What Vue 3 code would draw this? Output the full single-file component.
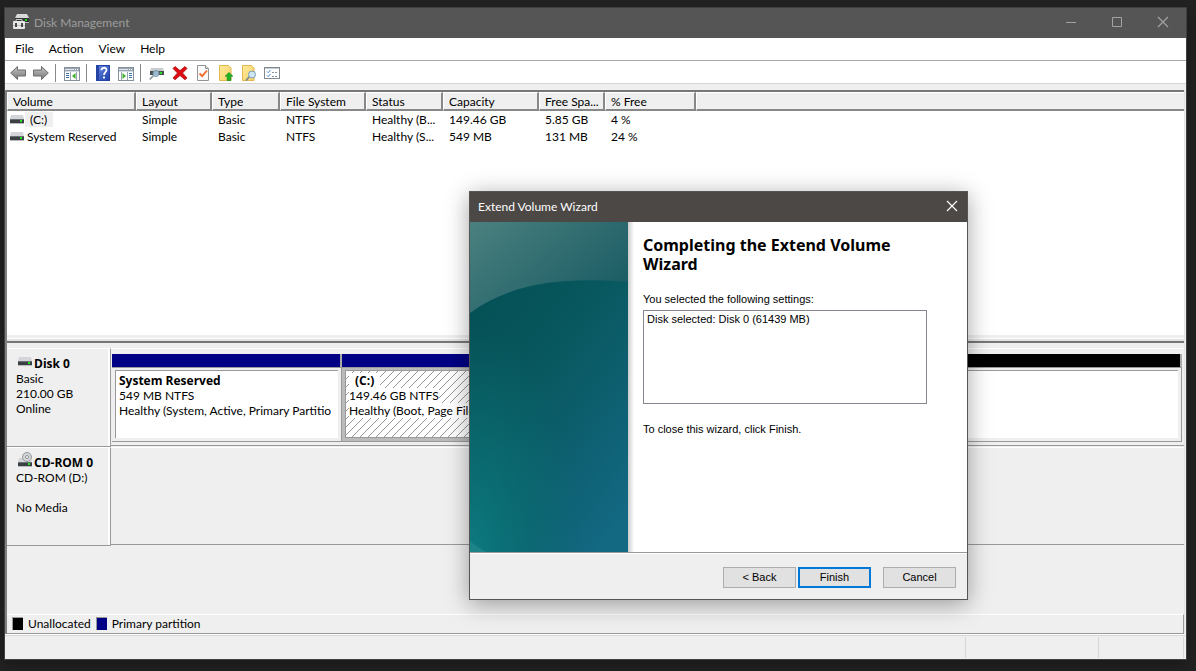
<script setup>
const menus = ['File', 'Action', 'View', 'Help']

const columns = [
  { name: 'Volume', cls: 'c-volume' },
  { name: 'Layout', cls: 'c-layout' },
  { name: 'Type', cls: 'c-type' },
  { name: 'File System', cls: 'c-fs' },
  { name: 'Status', cls: 'c-status' },
  { name: 'Capacity', cls: 'c-capacity' },
  { name: 'Free Spa...', cls: 'c-free' },
  { name: '% Free', cls: 'c-percent' },
]

const volumes = [
  { name: '(C:)', selected: true, cells: ['Simple', 'Basic', 'NTFS', 'Healthy (B...', '149.46 GB', '5.85 GB', '4 %'] },
  { name: 'System Reserved', selected: false, cells: ['Simple', 'Basic', 'NTFS', 'Healthy (S...', '549 MB', '131 MB', '24 %'] },
]
</script>

<template>
  <div class="desktop">
    <svg class="defs" width="0" height="0" aria-hidden="true">
      <defs>
        <linearGradient id="gArrow" x1="0" y1="0" x2="0" y2="1">
          <stop offset="0" stop-color="#c4c4c4" />
          <stop offset="1" stop-color="#777" />
        </linearGradient>
        <linearGradient id="gHelp" x1="0" y1="0" x2="1" y2="1">
          <stop offset="0" stop-color="#6b8be6" />
          <stop offset="1" stop-color="#1b3dab" />
        </linearGradient>
        <linearGradient id="gNote" x1="0" y1="0" x2="1" y2="1">
          <stop offset="0" stop-color="#ffe99a" />
          <stop offset="1" stop-color="#f8d468" />
        </linearGradient>
        <symbol id="drive" viewBox="0 0 14 9">
          <path d="M1 0h12l1 4H0z" fill="#d3d5d8" />
          <rect x="0" y="4" width="14" height="4" fill="#3b4043" />
          <rect x="0" y="4" width="14" height="1" fill="#6b7074" />
          <rect x="0" y="8" width="14" height="1" fill="#b9bcbf" />
          <rect x="10" y="5" width="2" height="2" fill="#25e525" />
        </symbol>
        <symbol id="panel" viewBox="0 0 16 14">
          <rect x="0.5" y="0.5" width="15" height="13" fill="#fff" stroke="#87919d" />
          <rect x="1" y="1" width="14" height="3" fill="#9aa5b3" />
          <rect x="1" y="2" width="9" height="1" fill="#dfe5ec" />
          <rect x="11" y="2" width="1" height="1" fill="#fff" />
          <rect x="13" y="2" width="1" height="1" fill="#fff" />
          <rect x="1" y="4" width="14" height="1" fill="#d5dae0" />
        </symbol>
      </defs>
    </svg>

    <main class="window">
      <header class="titlebar">
        <svg class="app-icon" width="16" height="16" viewBox="0 0 16 16" aria-hidden="true">
          <path d="M4 0h10l2 4H2z" fill="#d9d9d9" />
          <rect x="2" y="4" width="14" height="4" fill="#2f3433" />
          <rect x="12" y="5" width="2" height="2" fill="#20d520" />
          <rect x="12" y="8" width="4" height="1" fill="#bbb" />
          <path d="M3 7V5.500h6V7" fill="none" stroke="#c8c8c8" />
          <rect x="0" y="7" width="12" height="8" rx="1" fill="#e6e6e6" />
          <rect x="0" y="11" width="12" height="1" fill="#bdbdbd" />
          <rect x="2" y="9" width="2" height="4" fill="#4a4a4a" />
          <rect x="8" y="9" width="2" height="4" fill="#4a4a4a" />
        </svg>
        <h1>Disk Management</h1>
        <div class="caption">
          <button type="button" aria-label="Minimize">
            <svg width="12" height="12" viewBox="0 0 12 12"><path d="M1 6.500h10" stroke="#a3a3a3" /></svg>
          </button>
          <button type="button" aria-label="Maximize">
            <svg width="12" height="12" viewBox="0 0 12 12"><path d="M1.500 1.500h9v9h-9z" stroke="#a3a3a3" fill="none" /></svg>
          </button>
          <button type="button" aria-label="Close">
            <svg width="12" height="12" viewBox="0 0 12 12"><path d="M1 1l10 10M11 1L1 11" stroke="#a3a3a3" stroke-width="1.200" /></svg>
          </button>
        </div>
      </header>

      <nav class="menubar">
        <button v-for="m in menus" :key="m" type="button">{{ m }}</button>
      </nav>

      <div class="toolbar">
        <button type="button" aria-label="Back">
          <svg width="16" height="16" viewBox="0 0 16 16"><path d="M7.500 1.500v3.500h8v6h-8v3.500L.7 8z" fill="url(#gArrow)" stroke="#6c6c6c" stroke-linejoin="round" /></svg>
        </button>
        <button type="button" aria-label="Forward">
          <svg width="16" height="16" viewBox="0 0 16 16"><path d="M8.500 1.500v3.500h-8v6h8v3.500L15.300 8z" fill="url(#gArrow)" stroke="#6c6c6c" stroke-linejoin="round" /></svg>
        </button>
        <i class="sep"></i>
        <button type="button" aria-label="Show or hide console tree">
          <svg width="16" height="16" viewBox="0 0 16 16">
            <use href="#panel" y="2" width="16" height="14" />
            <path d="M2 8.500h3M2 10.500h3M2 12.500h3" stroke="#3a70a8" />
            <path d="M6.500 7v8M12.500 7v8" stroke="#9aa5b3" />
            <path d="M11.500 8v6L8 11z" fill="#3fae29" />
          </svg>
        </button>
        <i class="sep"></i>
        <button type="button" aria-label="Help">
          <svg width="14" height="16" viewBox="0 0 14 16">
            <rect x=".5" y=".5" width="13" height="15" fill="url(#gHelp)" stroke="#2444a5" />
            <rect x="1" y="1" width="2" height="14" fill="#2543a0" />
            <path d="M5.500 5.200C5.500 2 10.500 2 10.500 5c0 2-2.500 2.300-2.500 5" fill="none" stroke="#fff" stroke-width="1.800" />
            <rect x="7" y="11.500" width="2" height="2" fill="#fff" />
          </svg>
        </button>
        <button type="button" aria-label="Show or hide action pane">
          <svg width="16" height="16" viewBox="0 0 16 16">
            <use href="#panel" y="2" width="16" height="14" />
            <path d="M11 8.500h3M11 10.500h3M11 12.500h3" stroke="#3a70a8" />
            <path d="M3.500 7v8M9.500 7v8" stroke="#9aa5b3" />
            <path d="M4.500 8v6L8 11z" fill="#3fae29" />
          </svg>
        </button>
        <i class="sep"></i>
        <button type="button" aria-label="Rescan disks">
          <svg width="16" height="16" viewBox="0 0 16 16">
            <path d="M2 3h12l1 3H1z" fill="#c9cccf" />
            <rect x="1" y="6" width="14" height="4" fill="#4a5153" />
            <rect x="11" y="7" width="2" height="2" fill="#25e525" />
            <path d="M4.500 10.500L.7 14.500" stroke="#8d9aa5" stroke-width="1.800" />
            <circle cx="7" cy="8.500" r="3" fill="#a5cde8" fill-opacity=".85" stroke="#7b95a8" />
          </svg>
        </button>
        <button type="button" aria-label="Delete">
          <svg width="16" height="16" viewBox="0 0 16 16">
            <path d="M3 1.500L8 5.600 13 1.500l2 2L10.500 8l4.500 5-2 1.700L8 10.500l-5 4.200L1 13l4.500-5L1 3.500z" fill="#de0b12" stroke="#aa1016" stroke-width=".8" />
          </svg>
        </button>
        <button type="button" aria-label="Properties">
          <svg width="16" height="16" viewBox="0 0 16 16">
            <path d="M2.500 .5h8l3 3v12h-11z" fill="#fafafa" stroke="#949494" />
            <path d="M10.500 .5v3h3" fill="#ddd" stroke="#949494" />
            <path d="M4.500 8.500l2.700 2.700L12 5.500" fill="none" stroke="#ef6a28" stroke-width="1.800" />
          </svg>
        </button>
        <button type="button" aria-label="Up">
          <svg width="16" height="16" viewBox="0 0 16 16">
            <path d="M1.500 .5h9l2.500 2.500v12.500H1.500z" fill="url(#gNote)" stroke="#e2b750" />
            <path d="M11 7.500l3.800 3.700h-2V15.500H9.200v-4.300h-2z" fill="#1fb526" stroke="#128c1c" stroke-width=".7" />
          </svg>
        </button>
        <button type="button" aria-label="Find">
          <svg width="16" height="16" viewBox="0 0 16 16">
            <path d="M1.500 .5h9l2.500 2.500v12.500H1.500z" fill="url(#gNote)" stroke="#e2b750" />
            <path d="M8.500 11.500L5 15.500" stroke="#7f8b94" stroke-width="1.800" />
            <circle cx="11" cy="9.500" r="3.500" fill="#cfe6f5" stroke="#7c9db8" />
          </svg>
        </button>
        <button type="button" aria-label="Options">
          <svg width="16" height="16" viewBox="0 0 16 16">
            <rect x=".5" y="2.500" width="15" height="11" fill="#fff" stroke="#808990" />
            <path d="M1 3.500h14" stroke="#c3cad1" />
            <path d="M3 6.500l1.200 1.200L6.500 5M3 10.500l1.200 1.200L6.500 9" fill="none" stroke="#3d8ad0" />
            <path d="M8 7.500h2M11 7.500h2M8 11.500h2M11 11.500h2" stroke="#8b939a" />
          </svg>
        </button>
      </div>

      <div class="panes">
        <section class="list-pane">
          <table>
            <colgroup>
              <col v-for="c in columns" :key="c.name" :class="c.cls" />
              <col />
            </colgroup>
            <thead>
              <tr>
                <th v-for="c in columns" :key="c.name" scope="col">{{ c.name }}</th>
                <td class="filler"></td>
              </tr>
            </thead>
            <tbody>
              <tr v-for="v in volumes" :key="v.name">
                <td class="volume">
                  <div class="volume-inner">
                    <svg width="14" height="9" aria-hidden="true"><use href="#drive" /></svg>
                    <span :class="['vname', { selected: v.selected }]">{{ v.name }}</span>
                  </div>
                </td>
                <td v-for="(cell, i) in v.cells" :key="i">{{ cell }}</td>
                <td></td>
              </tr>
            </tbody>
          </table>
        </section>

        <div class="splitter"></div>

        <section class="graph-pane">
          <div class="disk">
            <div class="disk-label">
              <h2>
                <svg width="14" height="9" aria-hidden="true"><use href="#drive" /></svg>
                <span>Disk 0</span>
              </h2>
              <p>Basic</p>
              <p>210.00 GB</p>
              <p>Online</p>
            </div>
            <div class="partitions">
              <article class="part reserved">
                <div class="bar"></div>
                <div class="frame">
                  <div class="info">
                    <h3>System Reserved</h3>
                    <p>549 MB NTFS</p>
                    <p>Healthy (System, Active, Primary Partitio</p>
                  </div>
                </div>
              </article>
              <article class="part cdrive">
                <div class="bar"></div>
                <div class="frame">
                  <div class="info">
                    <svg class="hatch" width="100%" height="100%" aria-hidden="true">
                      <defs>
                        <pattern id="hatch" width="8" height="8" patternUnits="userSpaceOnUse">
                          <path d="M0 7h1v1H0zM1 6h1v1H1zM2 5h1v1H2zM3 4h1v1H3zM4 3h1v1H4zM5 2h1v1H5zM6 1h1v1H6zM7 0h1v1H7z" fill="#979797" shape-rendering="crispEdges" />
                        </pattern>
                      </defs>
                      <rect width="100%" height="100%" fill="url(#hatch)" />
                    </svg>
                    <h3><span class="drive-letter">(C:)</span></h3>
                    <p><span>149.46 GB NTFS</span></p>
                    <p><span>Healthy (Boot, Page File, Crash Dump)</span></p>
                  </div>
                </div>
              </article>
              <article class="part free">
                <div class="bar"></div>
                <div class="frame"><div class="info"></div></div>
              </article>
            </div>
          </div>

          <div class="disk">
            <div class="disk-label">
              <h2>
                <svg class="cd" width="14" height="15" viewBox="0 0 14 15" aria-hidden="true">
                  <use href="#drive" y="6" width="14" height="9" />
                  <circle cx="9" cy="5" r="4.500" fill="#d4d6d7" stroke="#93989b" />
                  <circle cx="9" cy="5" r="1.500" fill="#fff" stroke="#8b9093" />
                </svg>
                <span>CD-ROM 0</span>
              </h2>
              <p>CD-ROM (D:)</p>
              <p class="blank"></p>
              <p>No Media</p>
            </div>
            <div class="partitions"></div>
          </div>
        </section>

        <div class="legend">
          <span class="swatch black"></span><span>Unallocated</span>
          <span class="swatch navy"></span><span>Primary partition</span>
        </div>
      </div>

      <footer class="statusbar"><span></span><span></span><span></span></footer>
    </main>

    <div class="wizard" role="dialog" aria-labelledby="wizard-title">
      <header class="wizard-title">
        <span id="wizard-title">Extend Volume Wizard</span>
        <button type="button" aria-label="Close">
          <svg width="12" height="12" viewBox="0 0 12 12"><path d="M1 1l10 10M11 1L1 11" stroke="#fff" stroke-width="1.200" /></svg>
        </button>
      </header>
      <div class="wizard-body">
        <svg class="banner" viewBox="0 0 158 330" preserveAspectRatio="none" aria-hidden="true">
          <defs>
            <linearGradient id="gSea" x1="0.2" y1="0.1" x2="0.8" y2="1">
              <stop offset="0" stop-color="#045055" />
              <stop offset="0.400" stop-color="#08585f" />
              <stop offset="1" stop-color="#136882" />
            </linearGradient>
            <radialGradient id="gGlow" cx="0" cy="1" r="0.700">
              <stop offset="0" stop-color="#0c7a80" />
              <stop offset="0.500" stop-color="#0a7074" stop-opacity="0.600" />
              <stop offset="1" stop-color="#0a6a6e" stop-opacity="0" />
            </radialGradient>
            <linearGradient id="gSky" x1="0" y1="0" x2="1" y2="0.700">
              <stop offset="0" stop-color="#4b807f" />
              <stop offset="1" stop-color="#1a5c64" />
            </linearGradient>
          </defs>
          <rect width="158" height="330" fill="url(#gSea)" />
          <rect width="158" height="330" fill="url(#gGlow)" />
          <path d="M0 0H158V60C95 55 42 60 0 91z" fill="url(#gSky)" />
          <path d="M0 319q8 7 16 11H0z" fill="#1c8486" />
        </svg>
        <div class="wizard-content">
          <h2>Completing the Extend Volume Wizard</h2>
          <label for="settings">You selected the following settings:</label>
          <textarea id="settings" readonly>Disk selected: Disk 0 (61439 MB)</textarea>
          <p>To close this wizard, click Finish.</p>
        </div>
      </div>
      <footer class="wizard-footer">
        <button type="button">&lt; Back</button>
        <button type="button" class="primary">Finish</button>
        <button type="button" class="cancel">Cancel</button>
      </footer>
    </div>
  </div>
</template>

<style>
html,
body {
  margin: 0;
  background: #222;
}
</style>

<style scoped>
* {
  box-sizing: border-box;
}

h1,
h2,
h3,
p {
  margin: 0;
  font-size: inherit;
}

button {
  font: inherit;
  color: inherit;
  border: 0;
  padding: 0;
  background: none;
}

svg {
  display: block;
  flex: none;
}

.defs {
  position: absolute;
}

.desktop {
  position: relative;
  display: flex;
  min-height: 100vh;
  padding: 7px 9px 11px 4px;
  background: #222;
  color: #000;
  font: 12px/15px Lato, "Open Sans", sans-serif;
}

.window {
  flex: 1;
  min-width: 0;
  display: flex;
  flex-direction: column;
  border: 1px solid #404040;
  background: #efefef;
  box-shadow: 0 4px 14px rgba(0, 0, 0, 0.3);
}

.titlebar {
  display: flex;
  align-items: center;
  height: 30px;
  padding: 0 0 2px 8px;
  background: #555;
  color: #9d9d9d;
}

.titlebar h1 {
  flex: 1;
  padding-left: 5px;
  font-weight: 400;
}

.caption {
  display: flex;
}

.caption button {
  display: grid;
  place-items: center;
  width: 46px;
  height: 28px;
}

.menubar {
  display: flex;
  gap: 15px;
  height: 23px;
  padding: 0 0 2px 10px;
  background: #fff;
  border-bottom: 1px solid #a8a8a8;
}

.toolbar {
  display: flex;
  align-items: center;
  gap: 7px;
  height: 23px;
  padding: 2px 5px 0;
  background: #fff;
  border-bottom: 1px solid #d6d6d6;
}

.toolbar button {
  display: grid;
  place-items: center;
  width: 16px;
}

.sep {
  width: 1px;
  height: 18px;
  margin: 0 1px 0 -1px;
  background: #8a8a8a;
}

.panes {
  flex: 1;
  display: flex;
  flex-direction: column;
  margin: 6px 1px 0 0;
  border-left: 2px solid #808080;
  border-right: 1px solid #e3e3e3;
}

.list-pane {
  flex: 1;
  background: #fff;
  border-top: 2px solid #777;
}

table {
  width: 100%;
  table-layout: fixed;
  border-collapse: separate;
  border-spacing: 0;
}

.c-volume { width: 129px; }
.c-layout { width: 76px; }
.c-type { width: 68px; }
.c-fs { width: 86px; }
.c-status { width: 77px; }
.c-capacity { width: 96px; }
.c-free { width: 66px; }
.c-percent { width: 91px; }

th,
.filler {
  height: 19px;
  padding: 0 0 0 5px;
  background: #efefef;
  font-weight: 400;
  text-align: left;
  white-space: nowrap;
  border-top: 1px solid #fff;
  border-left: 1px solid #fff;
  border-right: 2px solid #777;
  border-right-color: #888;
  border-bottom: 2px solid #888;
}

.filler {
  border-right: 0;
}

tbody td {
  height: 17px;
  padding: 0 0 0 6px;
  white-space: nowrap;
}

tbody td.volume {
  padding-left: 3px;
}

.volume-inner {
  display: flex;
  align-items: center;
}

.vname {
  padding: 0 3px;
}

.vname.selected {
  margin-left: 1px;
  padding: 0 6px 0 5px;
  background: #efefef;
}

.splitter {
  height: 13px;
  background: linear-gradient(#efefef 3px, #fff 3px, #fff 4px, #e3e3e3 4px, #e3e3e3 6px, #777 6px, #777 8px, #efefef 8px);
}

.graph-pane {
  min-height: 266px;
}

.disk {
  display: grid;
  grid-template-columns: 104px 1fr;
  min-height: 99px;
}

.disk-label {
  padding: 7px 0 0 9px;
  border-top: 1px solid #fff;
  border-right: 1px solid #999;
  border-bottom: 1px solid #999;
  box-shadow: inset -2px 0 #fff;
}

.disk-label h2,
.info h3 {
  font-family: "Open Sans", "Noto Sans", sans-serif;
}

.disk-label h2 {
  display: flex;
  gap: 2px;
  padding-left: 2px;
}

.disk-label h2 svg {
  margin-top: 1px;
}

.disk-label h2 svg.cd {
  margin-top: -3px;
}

.blank {
  height: 15px;
}

.partitions {
  display: flex;
  min-width: 0;
  margin-bottom: 1px;
  padding: 5px 2px 3px 1px;
  border-top: 1px solid #fff;
  border-bottom: 1px solid #999;
}

.part {
  display: flex;
  flex-direction: column;
  min-width: 0;
}

.reserved { flex: 0 0 230px; }
.cdrive { flex: 0 0 480px; }
.free { flex: 1; }

.bar {
  height: 13px;
  background: #000084;
  border-right: 2px solid #aaa;
}

.free .bar {
  background: #000;
}

.frame {
  flex: 1;
  padding: 2px 3px 3px;
  border: solid #999;
  border-width: 1px 1px 1px 0;
}

.info {
  position: relative;
  height: 100%;
  padding: 2px 0 0 3px;
  overflow: hidden;
  white-space: nowrap;
  background: #fff;
  border: solid #999;
  border-width: 1px 0 0 1px;
}

.cdrive .frame {
  background: #bbb;
}

.cdrive .info {
  border-width: 1px;
}

.hatch {
  position: absolute;
  inset: 0;
}

.cdrive h3,
.cdrive p {
  position: relative;
}

.cdrive h3 span,
.cdrive p span {
  display: inline-block;
  background: #fff;
}

.cdrive .drive-letter {
  padding: 0 6px;
}

.legend {
  display: flex;
  align-items: center;
  gap: 5px;
  height: 20px;
  padding: 0 0 2px 5px;
  border-top: 1px solid #fff;
  border-bottom: 1px solid #999;
  border-right: 1px solid #999;
}

.swatch {
  width: 11px;
  height: 13px;
  border-top: 1px solid #999;
  border-left: 1px solid #999;
}

.black { background: #000; }
.navy { background: #000084; }

.statusbar {
  display: flex;
  justify-content: flex-end;
  height: 25px;
  padding: 2px 2px 1px;
  border-top: 1px solid #fff;
  box-shadow: inset 0 1px #d6d6d6;
}

.statusbar span {
  width: 133px;
  border-right: 1px solid #d6d6d6;
}

.statusbar span:last-child {
  width: 85px;
}

.wizard {
  position: absolute;
  left: 469px;
  top: 191px;
  width: 499px;
  border: 1px solid #555;
  background: #efefef;
  box-shadow: 0 4px 22px rgba(0, 0, 0, 0.36);
}

.wizard-title {
  display: flex;
  align-items: center;
  justify-content: space-between;
  height: 30px;
  padding: 0 9px 2px 8px;
  background: #4b4845;
  color: #fff;
}

.wizard-body {
  display: flex;
  background: #fff;
  border-bottom: 1px solid #999;
}

.banner {
  width: 158px;
  height: 330px;
}

.wizard-content {
  flex: 1;
  padding: 14px 40px 0 15px;
  background: linear-gradient(90deg, #ccc, #eee 4px, #fff 6px);
  font: 11px/15px "Liberation Sans", Arial, sans-serif;
}

.wizard-content h2 {
  margin-bottom: 18px;
  font: bold 16px/19px "Noto Sans", sans-serif;
}

.wizard-content label {
  display: block;
}

.wizard-content textarea {
  display: block;
  width: 284px;
  height: 94px;
  margin: 3px 0 18px;
  padding: 1px 3px;
  border: 1px solid #828790;
  border-radius: 0;
  background: #fff;
  color: #000;
  font: inherit;
  resize: none;
}

.wizard-footer {
  display: flex;
  justify-content: flex-end;
  gap: 2px;
  padding: 13px 11px 11px;
  border-top: 1px solid #fff;
  font: 11px/15px "Liberation Sans", Arial, sans-serif;
}

.wizard-footer button {
  width: 73px;
  height: 21px;
  background: #e1e1e1;
  border: 1px solid #adadad;
}

.wizard-footer .primary {
  border: 2px solid #0078d7;
}

.wizard-footer .cancel {
  margin-left: 10px;
}
</style>
